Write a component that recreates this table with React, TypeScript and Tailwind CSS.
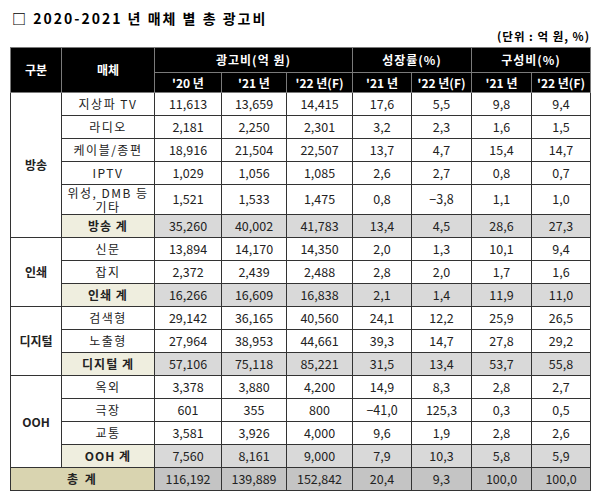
const font = { fontFamily: '"Noto Sans CJK KR", "Noto Sans", sans-serif' };

type Row = { media: string; vals: string[]; tall?: boolean };
type Group = { name: string; rows: Row[]; total: { label: string; vals: string[] } };

const groups: Group[] = [
  {
    name: "방송",
    rows: [
      { media: "지상파 TV", vals: ["11,613", "13,659", "14,415", "17,6", "5,5", "9,8", "9,4"] },
      { media: "라디오", vals: ["2,181", "2,250", "2,301", "3,2", "2,3", "1,6", "1,5"] },
      { media: "케이블/종편", vals: ["18,916", "21,504", "22,507", "13,7", "4,7", "15,4", "14,7"] },
      { media: "IPTV", vals: ["1,029", "1,056", "1,085", "2,6", "2,7", "0,8", "0,7"] },
      { media: "위성, DMB 등\n기타", vals: ["1,521", "1,533", "1,475", "0,8", "−3,8", "1,1", "1,0"], tall: true },
    ],
    total: { label: "방송 계", vals: ["35,260", "40,002", "41,783", "13,4", "4,5", "28,6", "27,3"] },
  },
  {
    name: "인쇄",
    rows: [
      { media: "신문", vals: ["13,894", "14,170", "14,350", "2,0", "1,3", "10,1", "9,4"] },
      { media: "잡지", vals: ["2,372", "2,439", "2,488", "2,8", "2,0", "1,7", "1,6"] },
    ],
    total: { label: "인쇄 계", vals: ["16,266", "16,609", "16,838", "2,1", "1,4", "11,9", "11,0"] },
  },
  {
    name: "디지털",
    rows: [
      { media: "검색형", vals: ["29,142", "36,165", "40,560", "24,1", "12,2", "25,9", "26,5"] },
      { media: "노출형", vals: ["27,964", "38,953", "44,661", "39,3", "14,7", "27,8", "29,2"] },
    ],
    total: { label: "디지털 계", vals: ["57,106", "75,118", "85,221", "31,5", "13,4", "53,7", "55,8"] },
  },
  {
    name: "OOH",
    rows: [
      { media: "옥외", vals: ["3,378", "3,880", "4,200", "14,9", "8,3", "2,8", "2,7"] },
      { media: "극장", vals: ["601", "355", "800", "−41,0", "125,3", "0,3", "0,5"] },
      { media: "교통", vals: ["3,581", "3,926", "4,000", "9,6", "1,9", "2,8", "2,6"] },
    ],
    total: { label: "OOH 계", vals: ["7,560", "8,161", "9,000", "7,9", "10,3", "5,8", "5,9"] },
  },
];

const grand = ["116,192", "139,889", "152,842", "20,4", "9,3", "100,0", "100,0"];

const th = "bg-black text-white font-bold text-[12px] border border-[#7a7a7a] p-0 text-center";
const td = "border border-[#333] p-0 text-center text-[12.5px] text-[#222]";

export default function App() {
  return (
    <div className="w-[600px] h-[497px] bg-white relative" style={font}>
      <div className="pl-[12px] pt-[8px] text-[14px] font-bold tracking-[2px] text-black h-[30px] leading-[20px]">
        □ 2020-2021 년 매체 별 총 광고비
      </div>
      <div className="flex justify-end pr-[10px] text-[11.5px] font-bold text-black h-[17px] leading-[13px] tracking-[1px]">
        (단위 : 억 원, %)
      </div>
      <table className="ml-[10px] border-collapse table-fixed w-[580px]">
        <colgroup>
          <col className="w-[51px]" />
          <col className="w-[93px]" />
          <col className="w-[67px]" />
          <col className="w-[65px]" />
          <col className="w-[66px]" />
          <col className="w-[59px]" />
          <col className="w-[60px]" />
          <col className="w-[60px]" />
          <col className="w-[59px]" />
        </colgroup>
        <thead>
          <tr className="h-[25px]">
            <th rowSpan={2} className={th}>구분</th>
            <th rowSpan={2} className={th}>매체</th>
            <th colSpan={3} className={th + " tracking-[1px]"}>광고비(억 원)</th>
            <th colSpan={2} className={th + " tracking-[1px]"}>성장률(%)</th>
            <th colSpan={2} className={th + " tracking-[1px]"}>구성비(%)</th>
          </tr>
          <tr className="h-[20px]">
            <th className={th}>'20 년</th>
            <th className={th}>'21 년</th>
            <th className={th}>'22 년(F)</th>
            <th className={th}>'21 년</th>
            <th className={th}>'22 년(F)</th>
            <th className={th}>'21 년</th>
            <th className={th}>'22 년(F)</th>
          </tr>
        </thead>
        <tbody>
          {groups.map((g) => (
            <>
              {g.rows.map((r, i) => (
                <tr key={g.name + r.media} className={r.tall ? "h-[30px]" : "h-[23px]"}>
                  {i === 0 && (
                    <td rowSpan={g.rows.length + 1} className={td + " font-bold text-[12px] bg-white"}>
                      {g.name}
                    </td>
                  )}
                  <td className={td + " text-[12px] tracking-[1.5px] leading-[14px] whitespace-pre-line"}>{r.media}</td>
                  {r.vals.map((v, j) => (
                    <td key={j} className={td}>{v}</td>
                  ))}
                </tr>
              ))}
              <tr key={g.name + "total"} className="h-[23px]">
                <td className={td + " bg-[#efeedf] font-bold text-[12px] tracking-[1px]"}>{g.total.label}</td>
                {g.total.vals.map((v, j) => (
                  <td key={j} className={td + " bg-[#d9d9d9]"}>{v}</td>
                ))}
              </tr>
            </>
          ))}
          <tr className="h-[23px]">
            <td colSpan={2} className={td + " bg-[#d9d4b0] font-bold text-[12px] tracking-[2px]"}>총 계</td>
            {grand.map((v, j) => (
              <td key={j} className={td + " bg-[#c4c4c4]"}>{v}</td>
            ))}
          </tr>
        </tbody>
      </table>
    </div>
  );
}
